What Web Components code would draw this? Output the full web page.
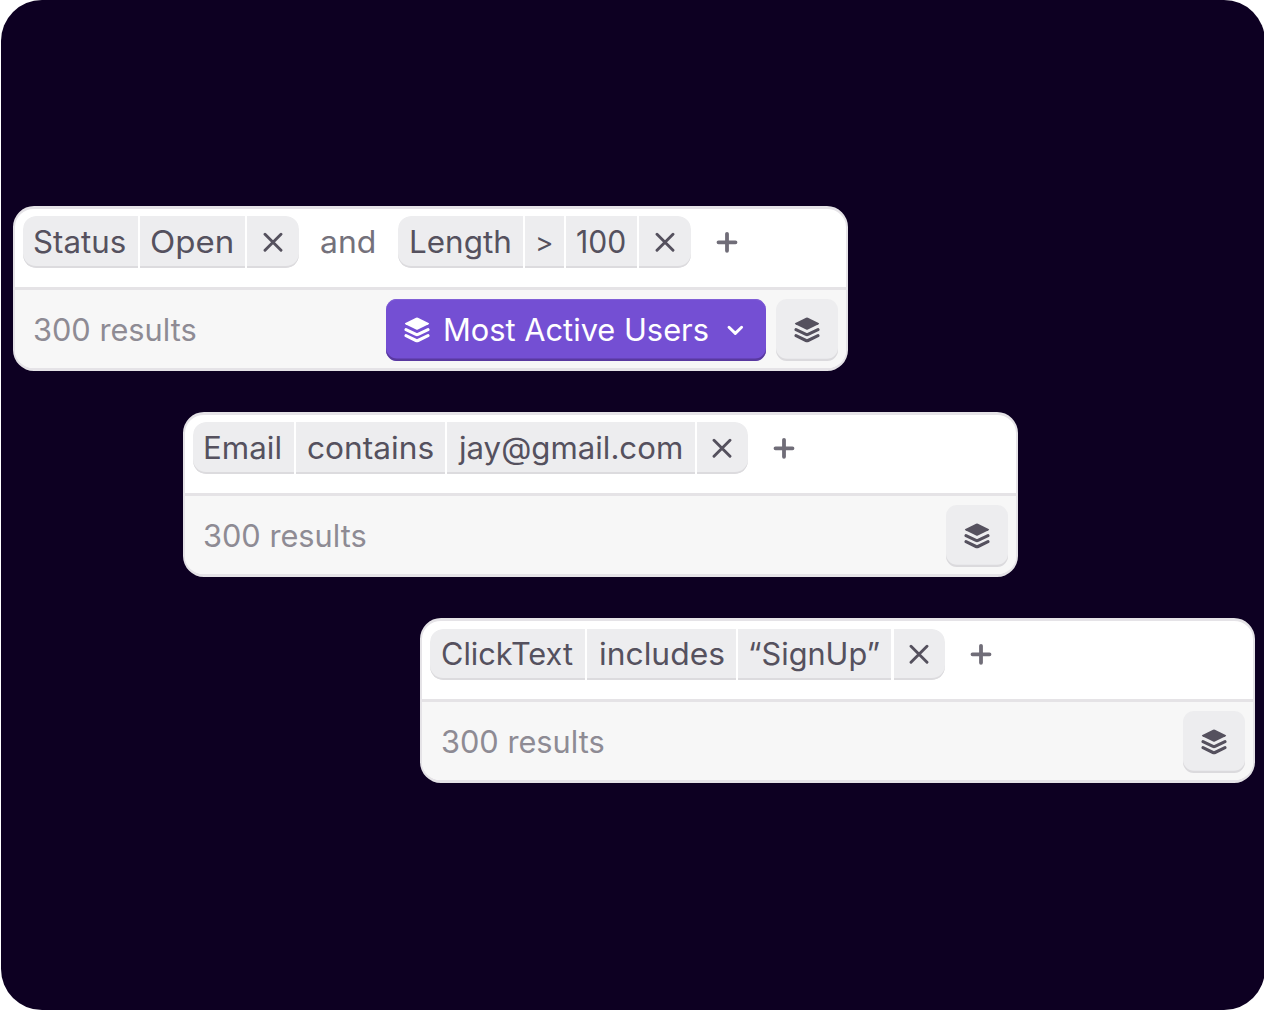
<!DOCTYPE html>
<html lang="en">
<head>
<meta charset="utf-8">
<title>Saved filters</title>
<style>
html,body{margin:0;background:#fff}
body{width:1264px;height:1010px;overflow:hidden;font:430 30.5px/36px Inter,"Liberation Sans",sans-serif;color:#55515e}
</style>
</head>
<body>
<filter-stage>
  <filter-card style="margin-left:11.8px">
    <filter-group slot="query">
      <filter-part style="width:114.8px;padding-left:11.6px"><fit-text ink="91">Status</fit-text></filter-part>
      <filter-part style="width:105px;padding-left:11.4px"><fit-text ink="81">Open</fit-text></filter-part>
      <filter-part style="width:51.8px"><ui-icon name="close"></ui-icon></filter-part>
    </filter-group>
    <fit-text slot="query" ink="53.5" style="margin-left:22.2px;width:76.7px;color:#74717b">and</fit-text>
    <filter-group slot="query">
      <filter-part style="width:124.8px;padding-left:13.3px"><fit-text ink="98.6">Length</fit-text></filter-part>
      <filter-part style="width:38.8px;padding-left:12.8px"><fit-text ink="13.4" size="27">&gt;</fit-text></filter-part>
      <filter-part style="width:71px;padding-left:11.3px"><fit-text ink="48">100</fit-text></filter-part>
      <filter-part style="width:51.6px"><ui-icon name="close"></ui-icon></filter-part>
    </filter-group>
    <ui-icon slot="query" name="plus" style="margin-left:24px"></ui-icon>
    <fit-text slot="count" ink="161.5">300 results</fit-text>
    <view-button slot="actions" primary>
      <ui-icon name="layers"></ui-icon>
      <fit-text ink="262.8" style="margin-left:14.9px;width:262.8px">Most Active Users</fit-text>
      <ui-icon name="chevron" style="margin-left:15.8px"></ui-icon>
    </view-button>
    <view-button slot="actions"><ui-icon name="layers"></ui-icon></view-button>
  </filter-card>

  <filter-card style="margin-left:181.9px">
    <filter-group slot="query">
      <filter-part style="width:100.7px;padding-left:12.6px"><fit-text ink="75.5">Email</fit-text></filter-part>
      <filter-part style="width:149px;padding-left:12px"><fit-text ink="125">contains</fit-text></filter-part>
      <filter-part style="width:247.4px;padding-left:10.6px"><fit-text ink="223.5">jay@gmail.com</fit-text></filter-part>
      <filter-part style="width:51.2px"><ui-icon name="close"></ui-icon></filter-part>
    </filter-group>
    <ui-icon slot="query" name="plus" style="margin-left:24px"></ui-icon>
    <fit-text slot="count" ink="161.5">300 results</fit-text>
    <view-button slot="actions"><ui-icon name="layers"></ui-icon></view-button>
  </filter-card>

  <filter-card style="margin-left:419px">
    <filter-group slot="query">
      <filter-part style="width:154.7px;padding-left:11.8px"><fit-text ink="131">ClickText</fit-text></filter-part>
      <filter-part style="width:149px;padding-left:13px"><fit-text ink="123.8">includes</fit-text></filter-part>
      <filter-part style="width:153px;padding-left:12px"><fit-text ink="129.5">“SignUp”</fit-text></filter-part>
      <filter-part style="width:51.2px"><ui-icon name="close"></ui-icon></filter-part>
    </filter-group>
    <ui-icon slot="query" name="plus" style="margin-left:24px"></ui-icon>
    <fit-text slot="count" ink="161.5">300 results</fit-text>
    <view-button slot="actions"><ui-icon name="layers"></ui-icon></view-button>
  </filter-card>
</filter-stage>

<script>
const define = (name, html, setup) => customElements.define(name, class extends HTMLElement {
  connectedCallback() {
    if (this.shadowRoot) return;
    this.attachShadow({mode: 'open'}).innerHTML = typeof html === 'function' ? html(this) : html;
    if (setup) setup(this);
  }
});

define('filter-stage', `<style>
:host{display:flex;flex-direction:column;align-items:flex-start;gap:41.4px;box-sizing:border-box;width:1264px;height:1010px;margin-left:1px;padding-top:206px;background:#0d0022;border-radius:41px}
</style><slot></slot>`);

define('filter-card', `<style>
:host{display:flex;flex-direction:column;box-sizing:border-box;width:835px;height:164.8px;border:solid #e5e3e7;border-width:3px 2px;border-radius:21px;background:#fff;overflow:hidden;flex:none}
.query{display:flex;align-items:center;box-sizing:border-box;height:78px;padding:0 8px 11.9px}
.results{display:flex;align-items:center;gap:10.2px;flex:1;border-top:3px solid #e5e3e6;background:#f7f7f7;padding:1.6px 8px 0 19.6px;color:#8e8b94}
.count{flex:1}
</style><div class="query"><slot name="query"></slot></div><div class="results"><div class="count"><slot name="count"></slot></div><slot name="actions"></slot></div>`);

define('filter-group', `<style>
:host{display:flex;gap:2.3px;height:51.7px;border-radius:13px;overflow:hidden;flex:none}
</style><slot></slot>`);

define('filter-part', `<style>
:host{display:flex;align-items:center;box-sizing:border-box;height:100%;background:#ededef;box-shadow:inset 0 -2px #dcdbde;flex:none}
:host(:last-child){justify-content:center;border-radius:0 13px 13px 0}
:host(:first-child){border-radius:13px 0 0 13px}
</style><slot></slot>`);

define('view-button', `<style>
:host{display:flex;align-items:center;justify-content:center;box-sizing:border-box;width:62px;height:62px;border-radius:11px;background:#ededef;box-shadow:inset 0 -2.2px #dbdadd;color:#55515e;flex:none}
:host([primary]){justify-content:flex-start;width:379.3px;padding-left:17.8px;background:#744fd3;box-shadow:inset 0 -2.5px #59399f,inset 0 1px #8160d7;color:#fff}
</style><slot></slot>`);

/* Label whose glyphs are widened, then tracked, so that they span the "ink" width. */
const pen = document.createElement('canvas').getContext('2d');
define('fit-text', `<style>
:host{display:block;white-space:pre;flex:none}
span{display:inline-block;transform-origin:0 50%}
</style><span></span>`, el => {
  const span = el.shadowRoot.querySelector('span');
  const text = el.textContent;
  const size = el.getAttribute('size') || 30.5;
  const target = +el.getAttribute('ink');
  span.textContent = text;
  pen.font = `430 ${size}px Inter, "Liberation Sans", sans-serif`;
  const m = pen.measureText(text);
  const ink = m.actualBoundingBoxRight + m.actualBoundingBoxLeft;
  const stretch = Math.min(1.1, Math.max(0.97, target / ink));
  span.style.fontSize = size + 'px';
  span.style.marginLeft = m.actualBoundingBoxLeft * stretch + 'px';
  span.style.transform = `scaleX(${stretch})`;
  if (text.length > 1) span.style.letterSpacing = (target / stretch - ink) / (text.length - 1) + 'px';
});

const icons = {
  close: [20, 20, '<path d="M2 2.3 18 18.3M18 2.3 2 18.3" fill="none" stroke="#55515e" stroke-width="2.9" stroke-linecap="round"/>'],
  plus: [24, 24, '<path d="M12 3.8V20.8M3.5 12.3H20.5" fill="none" stroke="#706d78" stroke-width="3.8" stroke-linecap="round"/>'],
  chevron: [22, 16, '<path d="M5 5.2 11.3 11.4 17.6 5.2" fill="none" stroke="#fff" stroke-width="2.9" stroke-linecap="round" stroke-linejoin="round"/>'],
  layers: [26, 26, '<path d="M12.1.7Q13 .3 13.9.7L24.6 5.9Q25.8 6.6 24.6 7.3L13.9 12.6Q13 13 12.1 12.6L1.4 7.3Q.2 6.6 1.4 5.9Z" fill="currentColor"/><path d="M2 12.6 12 17.4Q13 17.9 14 17.4L24 12.6M2 18.7 12 23.5Q13 24 14 23.5L24 18.7" fill="none" stroke="currentColor" stroke-width="3.1" stroke-linecap="round" stroke-linejoin="round"/>']
};
define('ui-icon', el => {
  const [w, h, body] = icons[el.getAttribute('name')];
  return `<style>:host{display:block;flex:none}svg{display:block}</style><svg width="${w}" height="${h}" viewBox="0 0 ${w} ${h}" aria-hidden="true">${body}</svg>`;
});
</script>
</body>
</html>
